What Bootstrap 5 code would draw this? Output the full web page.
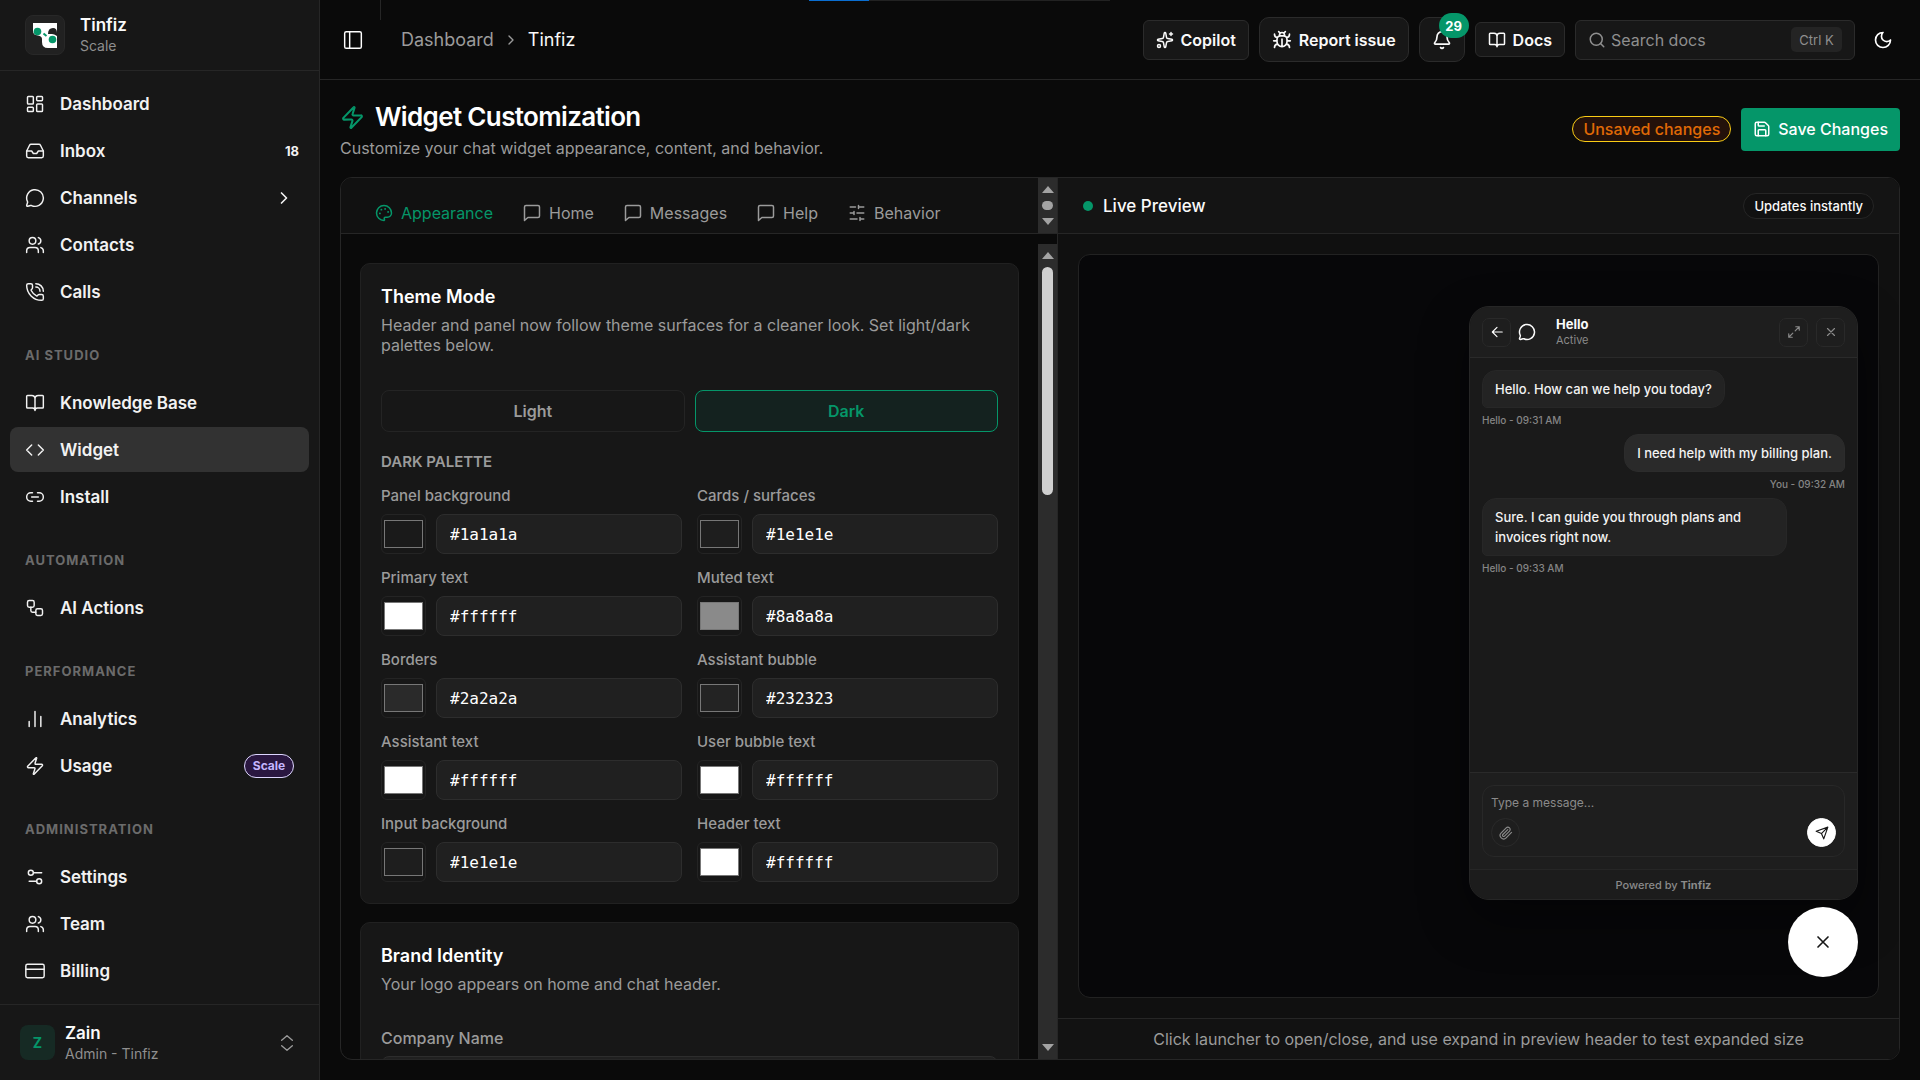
<!DOCTYPE html>
<html lang="en" data-bs-theme="dark">
<head>
<meta charset="utf-8">
<meta name="viewport" content="width=device-width, initial-scale=1">
<title>Widget Customization - Tinfiz</title>
<link rel="stylesheet" href="https://cdn.jsdelivr.net/npm/bootstrap@5.3.0/dist/css/bootstrap.min.css">
<style>
:root{--line:#262626;--soft:#9b9b9b;--brand:#059669}
body{font-family:"Inter","Noto Sans",sans-serif;background:#0a0a0a;color:#fafafa;font-size:16px;line-height:20px}
a{color:inherit;text-decoration:none}
h1,h2,p{margin:0}
.ico{width:20px;height:20px;flex:none;fill:none;stroke:currentColor;stroke-width:2;stroke-linecap:round;stroke-linejoin:round}
.ico-s{width:18px;height:18px}
.ico-xs{width:16px;height:16px}
.ico-14{width:14px;height:14px}
.thin{stroke-width:1.75}
.soft{color:var(--soft)}
.fill{min-width:0;min-height:0}
/* sidebar */
.side{width:320px;flex:none;background:#171717;border-right:1px solid var(--line)}
.side-top{height:71px;padding:0 25px;gap:15px;border-bottom:1px solid var(--line)}
.logo-box{width:40px;height:40px;background:#212121;border:1px solid #282828;border-radius:8px}
.side-name{font-weight:600;font-size:17px;line-height:22px}
.side-sub{font-size:14px;line-height:20px;color:#8f8f8f}
.side-nav{padding:10px 10px 0;min-height:0;overflow:hidden}
.side-list{gap:2px}
.side-link{height:45px;padding:0 15px;gap:15px;border-radius:8px;font-weight:600;font-size:17px;color:#f2f2f2}
.side-link.active{background:#323232}
.tally{font-size:13px;font-weight:700;margin-right:-5px}
.side-label{height:41px;margin:20px 0 5px;padding:0 15px;font-size:13px;font-weight:700;letter-spacing:1px;color:#6b6b6b}
.scale-pill{width:50px;height:24px;border:1px solid #ddd6fe;background:#2a1740;color:#c4b5fd;border-radius:12px;font-size:12px;font-weight:700}
.side-foot{height:76px;padding:0 20px;gap:10px;border-top:1px solid var(--line)}
.avatar{width:35px;height:35px;border-radius:8px;background:#162a24;color:var(--brand);font-size:14px;font-weight:700}
/* top bar */
.topbar{height:80px;flex:none;border-bottom:1px solid var(--line);padding:0 20px 0 19px}
.top-rule{left:60px;top:0;width:1px;height:20px;background:var(--line)}
.top-load{left:489px;top:0;width:301px;height:1px;background:#222}
.top-load div{width:60px;height:1px;background:#0a6ed1}
.crumb{font-size:18px;gap:9px;margin-left:38px}
.top-tools,.acts,.pair,.modes{gap:10px}
.tbtn{background:#171717;border:1px solid #2b2b2b;color:#fafafa;font-weight:600;font-size:16px;padding:0 12px;gap:7px}
.h35{height:35px;border-radius:6px}.h40{height:40px;border-radius:6px}.h45{height:45px;border-radius:10px}
.count{top:-5px;right:-5px;width:30px;height:25px;border-radius:13px;background:var(--brand);font-size:13px;font-weight:700;color:#fff}
.find{width:280px;background:#171717;border:1px solid #2b2b2b;padding:0 12px;gap:5px;color:#8f8f8f}
.find input,.chat-box textarea{background:none;border:0;outline:0;padding:0;min-width:0;color:#fff}
.find input{font-size:16px}
.find input::placeholder{color:#8f8f8f;opacity:1}
.key{width:51px;height:25px;flex:none;border-radius:5px;background:#242424;font-size:13px}
.moon{width:35px}
/* page head */
.page{padding:20px}
.page-title{font-size:26px;line-height:34px;font-weight:600}
.page-title{letter-spacing:-.025em}
.bolt{width:25px;height:25px;color:var(--brand);margin-right:10px}
.sub{font-size:16px;line-height:20px;margin-top:4px}
.unsaved{height:26px;padding:0 10px;border:1px solid #facc15;border-radius:13px;background:#23110a;color:#e06a06;font-size:16px;font-weight:500}
.save{height:43px;padding:0 12px;gap:7px;background:var(--brand);border:0;border-radius:4px;color:#fff;font-size:16px;font-weight:500}
/* workspace */
.work{margin-top:19px;border:1px solid var(--line);border-radius:12px;overflow:hidden;min-height:0}
.left-pane{width:716px;flex:none;min-height:0}
.pane-head{height:56px;flex:none;border-bottom:1px solid var(--line);background:#111}
.tabs{padding:14px 0 0 34px;gap:30px;font-size:16px;font-weight:500}
.tabs button{background:none;border:0;padding:0;gap:8px;color:var(--soft)}
.tabs button.active{color:var(--brand)}
.bar{width:19px;flex:none;background:#2c2c2c}
.bar-long{margin-top:10px;padding:8px 0}
.tri{width:0;height:0;border:6px solid transparent}
.tri-up{border-top:0;border-bottom:7px solid #a3a3a3}
.tri-down{border-bottom:0;border-top:7px solid #a3a3a3}
.knob{width:11px;height:9px;border-radius:5px;background:#a3a3a3}
.thumb{width:11px;height:228px;border-radius:6px;background:#d0d0d0;margin-top:8px}
.left-body{min-height:0;overflow:hidden}
.scroller{padding:29px 19px 0;gap:18px;min-width:0}
.block{background:#171717;border:1px solid #212121;border-radius:10px;padding:21px 20px}
.block h2{font-size:18px;line-height:24px;font-weight:600}
.block-note{font-size:16px;line-height:20px;color:var(--soft);margin-top:6px}
.modes{margin-top:35px}
.mode{height:42px;border:1px solid #242424;border-radius:8px;background:none;color:var(--soft);font-size:16px;font-weight:600}
.mode.active{background:#14221f;border-color:var(--brand);color:var(--brand)}
.pal-head{font-size:15px;font-weight:600;color:var(--soft);margin:20px 0 14px}
.pal{display:grid;grid-template-columns:1fr 1fr;gap:14px 15px}
.pal label,.field-label{display:block;font-size:15px;line-height:20px;font-weight:500;color:var(--soft);margin-bottom:8px}
.field-label{font-size:16px}
.firm{margin-top:34px}
.swatch{appearance:none;flex:none;width:45px;height:40px;background:#171717;border:1px solid #242424;border-radius:6px;padding:5px 2px}
.swatch::-webkit-color-swatch-wrapper{padding:0}
.swatch::-webkit-color-swatch{border:1px solid #777;border-radius:0}
.hex{height:40px;width:100%;min-width:0;background:#202020;border:1px solid #2d2d2d;border-radius:8px;padding:0 13px;color:#fff;font:16px "DejaVu Sans Mono",monospace}
/* preview */
.right-pane{border-left:1px solid var(--line);background:#101010;min-width:0}
.right-pane .pane-head{background:#141414;padding:0 25px}
.dot{width:10px;height:10px;border-radius:50%;background:var(--brand)}
.live{font-size:17px;font-weight:500;margin-left:10px}
.instant{height:26px;padding:0 10px;border:1px solid #262626;border-radius:13px;font-size:13px;font-weight:500;background:#111}
.stage{margin:20px;padding:20px;gap:7px;border:1px solid #222;border-radius:12px;background:#070709;min-height:0}
.chat{width:389px;height:594px;flex:none;background:#1a1a1a;border:1px solid #262626;border-radius:20px;overflow:hidden;box-shadow:0 20px 50px rgba(0,0,0,.4)}
.chat-head{height:51px;flex:none;background:#1e1e1e;border-bottom:1px solid #2a2a2a;padding:0 12px}
.sq{width:29px;height:29px;border:1px solid #292929;border-radius:7px;background:none;color:#fff;padding:0}
.dim{color:#8a8a8a}
.chat-ico{margin-left:7px}
.chat-who{margin-left:20px}
.chat-name{font-size:13px;line-height:16px;font-weight:700}
.chat-state{font-size:11px;line-height:16px;color:#8a8a8a}
.msgs{padding:12px}
.msg{border:1px solid #272727;background:#232323;border-radius:14px;padding:8px 12px;font-size:13px;line-height:20px;font-weight:500;color:#f3f3f3}
.msg-in{border-bottom-left-radius:5px;max-width:305px}
.msg-out{background:#2a2a2a;border-color:#2c2c2c;border-bottom-right-radius:5px}
.stamp{font-size:10px;line-height:16px;font-weight:500;color:#858585;margin:4px 0 6px}
.chat-entry{background:#1e1e1e;border-top:1px solid #2a2a2a;padding:12px}
.chat-box{height:72px;border:1px solid #282828;border-radius:12px;padding:7px 8px}
.chat-box textarea{resize:none;height:20px;font-size:12px;line-height:20px;overflow:hidden;margin-bottom:5px}
.chat-box textarea::placeholder{color:#8a8a8a;opacity:1}
.round{width:29px;height:29px;border-radius:50%;border:1px solid #2a2a2a;background:none;color:#8a8a8a;padding:0}
.round.send{background:#fff;border-color:#fff;color:#171717}
.chat-foot{height:30px;flex:none;background:#1c1c1c;border-top:1px solid #262626;font-size:11px;color:#8a8a8a;font-weight:500}
.launch{width:70px;height:70px;flex:none;border-radius:50%;background:#fff;border:0;color:#171717}
.right-foot{height:41px;flex:none;border-top:1px solid var(--line);background:#121212;font-size:16px;color:var(--soft)}
</style>
<script src="https://cdn.jsdelivr.net/npm/bootstrap@5.3.0/dist/js/bootstrap.bundle.min.js"></script>
</head>
<body>
<svg class="d-none" aria-hidden="true">
<symbol id="i-grid" viewBox="0 0 24 24"><rect x="3" y="3" width="7" height="9" rx="1"/><rect x="14" y="3" width="7" height="5" rx="1"/><rect x="14" y="12" width="7" height="9" rx="1"/><rect x="3" y="16" width="7" height="5" rx="1"/></symbol>
<symbol id="i-inbox" viewBox="0 0 24 24"><path d="M22 12h-6l-2 3h-4l-2-3H2"/><path d="M5.45 5.11 2 12v6a2 2 0 0 0 2 2h16a2 2 0 0 0 2-2v-6l-3.45-6.89A2 2 0 0 0 16.76 4H7.24a2 2 0 0 0-1.79 1.11z"/></symbol>
<symbol id="i-bubble" viewBox="0 0 24 24"><path d="M2.992 16.342a2 2 0 0 1 .094 1.167l-1.065 3.29a1 1 0 0 0 1.236 1.168l3.413-.998a2 2 0 0 1 1.099.092 10 10 0 1 0-4.777-4.719"/></symbol>
<symbol id="i-team" viewBox="0 0 24 24"><path d="M16 21v-2a4 4 0 0 0-4-4H6a4 4 0 0 0-4 4v2"/><circle cx="9" cy="7" r="4"/><path d="M16 3.13a4 4 0 0 1 0 7.75M22 21v-2a4 4 0 0 0-3-3.87"/></symbol>
<symbol id="i-call" viewBox="0 0 24 24"><path d="M13 2a9 9 0 0 1 9 9M13 6a5 5 0 0 1 5 5"/><path d="M13.832 16.568a1 1 0 0 0 1.213-.303l.355-.465A2 2 0 0 1 17 15h3a2 2 0 0 1 2 2v3a2 2 0 0 1-2 2A18 18 0 0 1 2 4a2 2 0 0 1 2-2h3a2 2 0 0 1 2 2v3a2 2 0 0 1-.8 1.6l-.468.351a1 1 0 0 0-.292 1.233 14 14 0 0 0 6.392 6.384"/></symbol>
<symbol id="i-book" viewBox="0 0 24 24"><path d="M12 7v14M3 18a1 1 0 0 1-1-1V4a1 1 0 0 1 1-1h5a4 4 0 0 1 4 4 4 4 0 0 1 4-4h5a1 1 0 0 1 1 1v13a1 1 0 0 1-1 1h-6a3 3 0 0 0-3 3 3 3 0 0 0-3-3z"/></symbol>
<symbol id="i-code" viewBox="0 0 24 24"><path d="m16 18 6-6-6-6M8 6l-6 6 6 6"/></symbol>
<symbol id="i-link" viewBox="0 0 24 24"><path d="M9 17H7A5 5 0 0 1 7 7h2M15 7h2a5 5 0 1 1 0 10h-2M8 12h8"/></symbol>
<symbol id="i-flow" viewBox="0 0 24 24"><rect x="3" y="3" width="8" height="8" rx="2"/><path d="M7 11v4a2 2 0 0 0 2 2h4"/><rect x="13" y="13" width="8" height="8" rx="2"/></symbol>
<symbol id="i-chart" viewBox="0 0 24 24"><path d="M5 21v-6M12 21V3M19 21V9"/></symbol>
<symbol id="i-zap" viewBox="0 0 24 24"><path d="M4 14a1 1 0 0 1-.78-1.63l9.9-10.2a.5.5 0 0 1 .86.46l-1.92 6.02A1 1 0 0 0 13 10h7a1 1 0 0 1 .78 1.63l-9.9 10.2a.5.5 0 0 1-.86-.46l1.92-6.02A1 1 0 0 0 11 14z"/></symbol>
<symbol id="i-set" viewBox="0 0 24 24"><path d="M20 7h-9M14 17H5"/><circle cx="17" cy="17" r="3"/><circle cx="7" cy="7" r="3"/></symbol>
<symbol id="i-cardpay" viewBox="0 0 24 24"><rect x="1" y="4" width="22" height="16" rx="2"/><path d="M1 10h22"/></symbol>
<symbol id="i-right" viewBox="0 0 24 24"><path d="m9 18 6-6-6-6"/></symbol>
<symbol id="i-updown" viewBox="0 0 24 24"><path d="m4 16 8 7 8-7M4 8l8-7 8 7"/></symbol>
<symbol id="i-panel" viewBox="0 0 24 24"><rect x="2" y="2" width="20" height="20" rx="2"/><path d="M8 2v20"/></symbol>
<symbol id="i-spark" viewBox="0 0 24 24"><path d="M11.017 2.814a1 1 0 0 1 1.966 0l1.051 5.558a2 2 0 0 0 1.594 1.594l5.558 1.051a1 1 0 0 1 0 1.966l-5.558 1.051a2 2 0 0 0-1.594 1.594l-1.051 5.558a1 1 0 0 1-1.966 0l-1.051-5.558a2 2 0 0 0-1.594-1.594l-5.558-1.051a1 1 0 0 1 0-1.966l5.558-1.051a2 2 0 0 0 1.594-1.594zM20 2v4M22 4h-4"/><circle cx="4" cy="20" r="2"/></symbol>
<symbol id="i-bug" viewBox="0 0 24 24"><path d="M12 20v-9M14 7a4 4 0 0 1 4 4v3a6 6 0 0 1-12 0v-3a4 4 0 0 1 4-4zM14.12 3.88 16 2M21 21a4 4 0 0 0-3.81-4M21 5a4 4 0 0 1-3.55 3.97M22 13h-4M3 21a4 4 0 0 1 3.81-4M3 5a4 4 0 0 0 3.55 3.97M6 13H2M8 2l1.88 1.88M9 7.13V6a3 3 0 1 1 6 0v1.13"/></symbol>
<symbol id="i-bell" viewBox="0 0 24 24"><path d="M10.268 21a2 2 0 0 0 3.464 0M3.262 15.326A1 1 0 0 0 4 17h16a1 1 0 0 0 .74-1.673C19.41 13.956 18 12.499 18 8A6 6 0 0 0 6 8c0 4.499-1.411 5.956-2.738 7.326"/></symbol>
<symbol id="i-search" viewBox="0 0 24 24"><circle cx="11" cy="11" r="8"/><path d="m21 21-4.3-4.3"/></symbol>
<symbol id="i-moon" viewBox="0 0 24 24"><path d="M12 3a6 6 0 0 0 9 9 9 9 0 1 1-9-9"/></symbol>
<symbol id="i-save" viewBox="0 0 24 24"><path d="M15.2 3a2 2 0 0 1 1.4.6l3.8 3.8a2 2 0 0 1 .6 1.4V19a2 2 0 0 1-2 2H5a2 2 0 0 1-2-2V5a2 2 0 0 1 2-2z"/><path d="M17 21v-7a1 1 0 0 0-1-1H8a1 1 0 0 0-1 1v7M7 3v4a1 1 0 0 0 1 1h7"/></symbol>
<symbol id="i-palette" viewBox="0 0 24 24"><path d="M12 22a10 10 0 1 1 10-10 5.5 5.5 0 0 1-5.5 5.5H14a1.8 1.8 0 0 0-1.4 2.9A1.1 1.1 0 0 1 12 22z"/><path d="M13.500 6.500h.01M17.500 10.500h.01M8.500 7.500h.01M6.500 12.500h.01" stroke-width="2.600"/></symbol>
<symbol id="i-msg" viewBox="0 0 24 24"><path d="M22 16a2 2 0 0 1-2 2H6.500L2 22V4a2 2 0 0 1 2-2h16a2 2 0 0 1 2 2z"/></symbol>
<symbol id="i-sliders" viewBox="0 0 24 24"><path d="M21 4h-7M10 4H3M21 12h-9M8 12H3M21 20h-5M12 20H3M14 2v4M8 10v4M16 18v4"/></symbol>
<symbol id="i-back" viewBox="0 0 24 24"><path d="m12 20-8-8 8-8M21 12H4"/></symbol>
<symbol id="i-expand" viewBox="0 0 24 24"><path d="M15 3h6v6M21 3l-7 7M3 21l7-7M9 21H3v-6"/></symbol>
<symbol id="i-x" viewBox="0 0 24 24"><path d="M18 6 6 18M6 6l12 12"/></symbol>
<symbol id="i-clip" viewBox="0 0 24 24"><path d="m21.44 11.05-9.19 9.19a6 6 0 0 1-8.49-8.49l8.57-8.57A4 4 0 1 1 18 8.84l-8.59 8.57a2 2 0 0 1-2.83-2.83l8.49-8.48"/></symbol>
<symbol id="i-send" viewBox="0 0 24 24"><path d="M22 2 11 13M22 2l-7 20-4-9-9-4z"/></symbol>
</svg>
<div class="d-flex vh-100 overflow-hidden">
<aside class="side d-flex flex-column">
  <div class="side-top d-flex align-items-center">
    <div class="logo-box d-flex align-items-center justify-content-center">
      <svg width="24" height="25" viewBox="0 0 24 25" aria-hidden="true"><path fill="#fff" d="M0 0h24v25H15q-6 0-6-6v-3q0-3-4-3.500Q0 12 0 8z"/><path fill="#212121" d="M15 11q0-6 5-6 4 0 4 5v3q-3-2-5-2z"/><circle cx="4.500" cy="8.500" r="3.800" fill="#059669"/><circle cx="19.500" cy="16.500" r="3.800" fill="#059669"/><path d="m10.500 10.500 3 2.500" stroke="#059669" stroke-width="2"/></svg>
    </div>
    <div><div class="side-name">Tinfiz</div><div class="side-sub">Scale</div></div>
  </div>
  <nav class="side-nav flex-grow-1">
    <div class="side-list d-flex flex-column">
      <a href="#" class="side-link d-flex align-items-center"><svg class="ico thin"><use href="#i-grid"/></svg>Dashboard</a>
      <a href="#" class="side-link d-flex align-items-center"><svg class="ico thin"><use href="#i-inbox"/></svg>Inbox<span class="tally ms-auto">18</span></a>
      <a href="#" class="side-link d-flex align-items-center"><svg class="ico thin"><use href="#i-bubble"/></svg>Channels<svg class="ico ms-auto"><use href="#i-right"/></svg></a>
      <a href="#" class="side-link d-flex align-items-center"><svg class="ico thin"><use href="#i-team"/></svg>Contacts</a>
      <a href="#" class="side-link d-flex align-items-center"><svg class="ico thin"><use href="#i-call"/></svg>Calls</a>
    </div>
    <div class="side-label d-flex align-items-center">AI STUDIO</div>
    <div class="side-list d-flex flex-column">
      <a href="#" class="side-link d-flex align-items-center"><svg class="ico thin"><use href="#i-book"/></svg>Knowledge Base</a>
      <a href="#" class="side-link active d-flex align-items-center"><svg class="ico thin"><use href="#i-code"/></svg>Widget</a>
      <a href="#" class="side-link d-flex align-items-center"><svg class="ico thin"><use href="#i-link"/></svg>Install</a>
    </div>
    <div class="side-label d-flex align-items-center">AUTOMATION</div>
    <div class="side-list d-flex flex-column">
      <a href="#" class="side-link d-flex align-items-center"><svg class="ico thin"><use href="#i-flow"/></svg>AI Actions</a>
    </div>
    <div class="side-label d-flex align-items-center">PERFORMANCE</div>
    <div class="side-list d-flex flex-column">
      <a href="#" class="side-link d-flex align-items-center"><svg class="ico thin"><use href="#i-chart"/></svg>Analytics</a>
      <a href="#" class="side-link d-flex align-items-center"><svg class="ico thin"><use href="#i-zap"/></svg>Usage<span class="scale-pill ms-auto d-flex align-items-center justify-content-center">Scale</span></a>
    </div>
    <div class="side-label d-flex align-items-center">ADMINISTRATION</div>
    <div class="side-list d-flex flex-column">
      <a href="#" class="side-link d-flex align-items-center"><svg class="ico thin"><use href="#i-set"/></svg>Settings</a>
      <a href="#" class="side-link d-flex align-items-center"><svg class="ico thin"><use href="#i-team"/></svg>Team</a>
      <a href="#" class="side-link d-flex align-items-center"><svg class="ico thin"><use href="#i-cardpay"/></svg>Billing</a>
    </div>
  </nav>
  <div class="side-foot d-flex align-items-center">
    <div class="avatar d-flex align-items-center justify-content-center">Z</div>
    <div><div class="side-name">Zain</div><div class="side-sub">Admin - Tinfiz</div></div>
    <svg class="ico ico-xs ms-auto me-1 soft"><use href="#i-updown"/></svg>
  </div>
</aside>
<div class="fill flex-grow-1 d-flex flex-column position-relative">
  <div class="top-rule position-absolute"></div>
  <div class="top-load position-absolute"><div></div></div>
  <header class="topbar d-flex align-items-center">
    <button type="button" class="btn p-0 border-0 d-flex ms-1" aria-label="Toggle sidebar"><svg class="ico thin text-white"><use href="#i-panel"/></svg></button>
    <nav class="crumb d-flex align-items-center" aria-label="Breadcrumb"><a href="#" class="soft">Dashboard</a><svg class="ico ico-xs soft"><use href="#i-right"/></svg><span>Tinfiz</span></nav>
    <div class="top-tools d-flex align-items-center ms-auto">
      <button type="button" class="tbtn h40 d-flex align-items-center"><svg class="ico ico-s"><use href="#i-spark"/></svg>Copilot</button>
      <button type="button" class="tbtn h45 d-flex align-items-center"><svg class="ico"><use href="#i-bug"/></svg>Report issue</button>
      <button type="button" class="tbtn h45 d-flex align-items-center position-relative" aria-label="Notifications"><svg class="ico"><use href="#i-bell"/></svg><span class="count position-absolute d-flex align-items-center justify-content-center">29</span></button>
      <a href="#" class="tbtn h35 d-flex align-items-center"><svg class="ico ico-s"><use href="#i-book"/></svg>Docs</a>
      <div class="find h40 d-flex align-items-center"><svg class="ico ico-s"><use href="#i-search"/></svg><input type="search" class="flex-grow-1" placeholder="Search docs" aria-label="Search docs"><span class="key d-flex align-items-center justify-content-center">Ctrl K</span></div>
      <button type="button" class="moon btn p-0 border-0 d-flex justify-content-center" aria-label="Dark mode"><svg class="ico text-white"><use href="#i-moon"/></svg></button>
    </div>
  </header>
  <main class="page fill flex-grow-1 d-flex flex-column">
    <div class="d-flex align-items-center justify-content-between">
      <div>
        <h1 class="page-title d-flex align-items-center"><svg class="ico bolt"><use href="#i-zap"/></svg>Widget Customization</h1>
        <p class="sub soft">Customize your chat widget appearance, content, and behavior.</p>
      </div>
      <div class="d-flex align-items-center acts">
        <span class="unsaved d-flex align-items-center">Unsaved changes</span>
        <button type="button" class="save d-flex align-items-center"><svg class="ico ico-s"><use href="#i-save"/></svg>Save Changes</button>
      </div>
    </div>
    <section class="work d-flex flex-grow-1">
      <div class="left-pane d-flex flex-column">
        <div class="pane-head d-flex">
          <div class="tabs flex-grow-1 d-flex align-items-center" role="tablist">
            <button type="button" role="tab" class="active d-flex align-items-center"><svg class="ico ico-s"><use href="#i-palette"/></svg>Appearance</button>
            <button type="button" role="tab" class="d-flex align-items-center"><svg class="ico ico-s"><use href="#i-msg"/></svg>Home</button>
            <button type="button" role="tab" class="d-flex align-items-center"><svg class="ico ico-s"><use href="#i-msg"/></svg>Messages</button>
            <button type="button" role="tab" class="d-flex align-items-center"><svg class="ico ico-s"><use href="#i-msg"/></svg>Help</button>
            <button type="button" role="tab" class="d-flex align-items-center"><svg class="ico ico-s"><use href="#i-sliders"/></svg>Behavior</button>
          </div>
          <div class="bar d-flex flex-column align-items-center justify-content-between py-2"><i class="tri tri-up"></i><i class="knob"></i><i class="tri tri-down"></i></div>
        </div>
        <div class="left-body flex-grow-1 d-flex">
          <div class="scroller flex-grow-1 d-flex flex-column">
            <section class="block">
              <h2>Theme Mode</h2>
              <p class="block-note">Header and panel now follow theme surfaces for a cleaner look. Set light/dark palettes below.</p>
              <div class="modes d-flex"><button type="button" class="mode flex-fill w-50">Light</button><button type="button" class="mode active flex-fill w-50">Dark</button></div>
              <div class="pal-head">DARK PALETTE</div>
              <div class="pal">
                <div><label for="c1">Panel background</label><div class="pair d-flex"><input type="color" class="swatch" value="#1a1a1a" aria-label="Pick panel background"><input id="c1" class="hex" value="#1a1a1a"></div></div>
                <div><label for="c2">Cards / surfaces</label><div class="pair d-flex"><input type="color" class="swatch" value="#1e1e1e" aria-label="Pick cards and surfaces"><input id="c2" class="hex" value="#1e1e1e"></div></div>
                <div><label for="c3">Primary text</label><div class="pair d-flex"><input type="color" class="swatch" value="#ffffff" aria-label="Pick primary text"><input id="c3" class="hex" value="#ffffff"></div></div>
                <div><label for="c4">Muted text</label><div class="pair d-flex"><input type="color" class="swatch" value="#8a8a8a" aria-label="Pick muted text"><input id="c4" class="hex" value="#8a8a8a"></div></div>
                <div><label for="c5">Borders</label><div class="pair d-flex"><input type="color" class="swatch" value="#2a2a2a" aria-label="Pick borders"><input id="c5" class="hex" value="#2a2a2a"></div></div>
                <div><label for="c6">Assistant bubble</label><div class="pair d-flex"><input type="color" class="swatch" value="#232323" aria-label="Pick assistant bubble"><input id="c6" class="hex" value="#232323"></div></div>
                <div><label for="c7">Assistant text</label><div class="pair d-flex"><input type="color" class="swatch" value="#ffffff" aria-label="Pick assistant text"><input id="c7" class="hex" value="#ffffff"></div></div>
                <div><label for="c8">User bubble text</label><div class="pair d-flex"><input type="color" class="swatch" value="#ffffff" aria-label="Pick user bubble text"><input id="c8" class="hex" value="#ffffff"></div></div>
                <div><label for="c9">Input background</label><div class="pair d-flex"><input type="color" class="swatch" value="#1e1e1e" aria-label="Pick input background"><input id="c9" class="hex" value="#1e1e1e"></div></div>
                <div><label for="c10">Header text</label><div class="pair d-flex"><input type="color" class="swatch" value="#ffffff" aria-label="Pick header text"><input id="c10" class="hex" value="#ffffff"></div></div>
              </div>
            </section>
            <section class="block flex-shrink-0">
              <h2>Brand Identity</h2>
              <p class="block-note">Your logo appears on home and chat header.</p>
              <div class="firm"><label class="field-label" for="firm">Company Name</label><input id="firm" class="hex"></div>
            </section>
          </div>
          <div class="bar bar-long d-flex flex-column align-items-center"><i class="tri tri-up"></i><i class="thumb"></i><i class="tri tri-down mt-auto"></i></div>
        </div>
      </div>
      <div class="right-pane flex-grow-1 d-flex flex-column">
        <div class="pane-head d-flex align-items-center"><span class="dot"></span><span class="live">Live Preview</span><span class="instant ms-auto d-flex align-items-center">Updates instantly</span></div>
        <div class="stage flex-grow-1 d-flex flex-column align-items-end justify-content-end">
          <div class="chat d-flex flex-column">
            <div class="chat-head d-flex align-items-center">
              <button type="button" class="sq d-flex align-items-center justify-content-center" aria-label="Back"><svg class="ico ico-14"><use href="#i-back"/></svg></button>
              <svg class="ico ico-s chat-ico"><use href="#i-bubble"/></svg>
              <div class="chat-who"><div class="chat-name">Hello</div><div class="chat-state">Active</div></div>
              <button type="button" class="sq dim d-flex align-items-center justify-content-center ms-auto" aria-label="Expand"><svg class="ico ico-14"><use href="#i-expand"/></svg></button>
              <button type="button" class="sq dim d-flex align-items-center justify-content-center ms-2" aria-label="Close"><svg class="ico ico-14"><use href="#i-x"/></svg></button>
            </div>
            <div class="msgs flex-grow-1 d-flex flex-column align-items-start">
              <div class="msg msg-in">Hello. How can we help you today?</div><div class="stamp">Hello - 09:31 AM</div>
              <div class="msg msg-out align-self-end">I need help with my billing plan.</div><div class="stamp align-self-end">You - 09:32 AM</div>
              <div class="msg msg-in">Sure. I can guide you through plans and invoices right now.</div><div class="stamp">Hello - 09:33 AM</div>
            </div>
            <div class="chat-entry"><div class="chat-box d-flex flex-column">
              <textarea placeholder="Type a message..." aria-label="Message"></textarea>
              <div class="d-flex justify-content-between"><button type="button" class="round d-flex align-items-center justify-content-center" aria-label="Attach"><svg class="ico ico-14"><use href="#i-clip"/></svg></button><button type="button" class="round send d-flex align-items-center justify-content-center" aria-label="Send"><svg class="ico ico-14"><use href="#i-send"/></svg></button></div>
            </div></div>
            <div class="chat-foot d-flex align-items-center justify-content-center">Powered by&nbsp;<b>Tinfiz</b></div>
          </div>
          <button type="button" class="launch d-flex align-items-center justify-content-center" aria-label="Close chat"><svg class="ico"><use href="#i-x"/></svg></button>
        </div>
        <div class="right-foot d-flex align-items-center justify-content-center">Click launcher to open/close, and use expand in preview header to test expanded size</div>
      </div>
    </section>
  </main>
</div>
</div>
</body>
</html>
